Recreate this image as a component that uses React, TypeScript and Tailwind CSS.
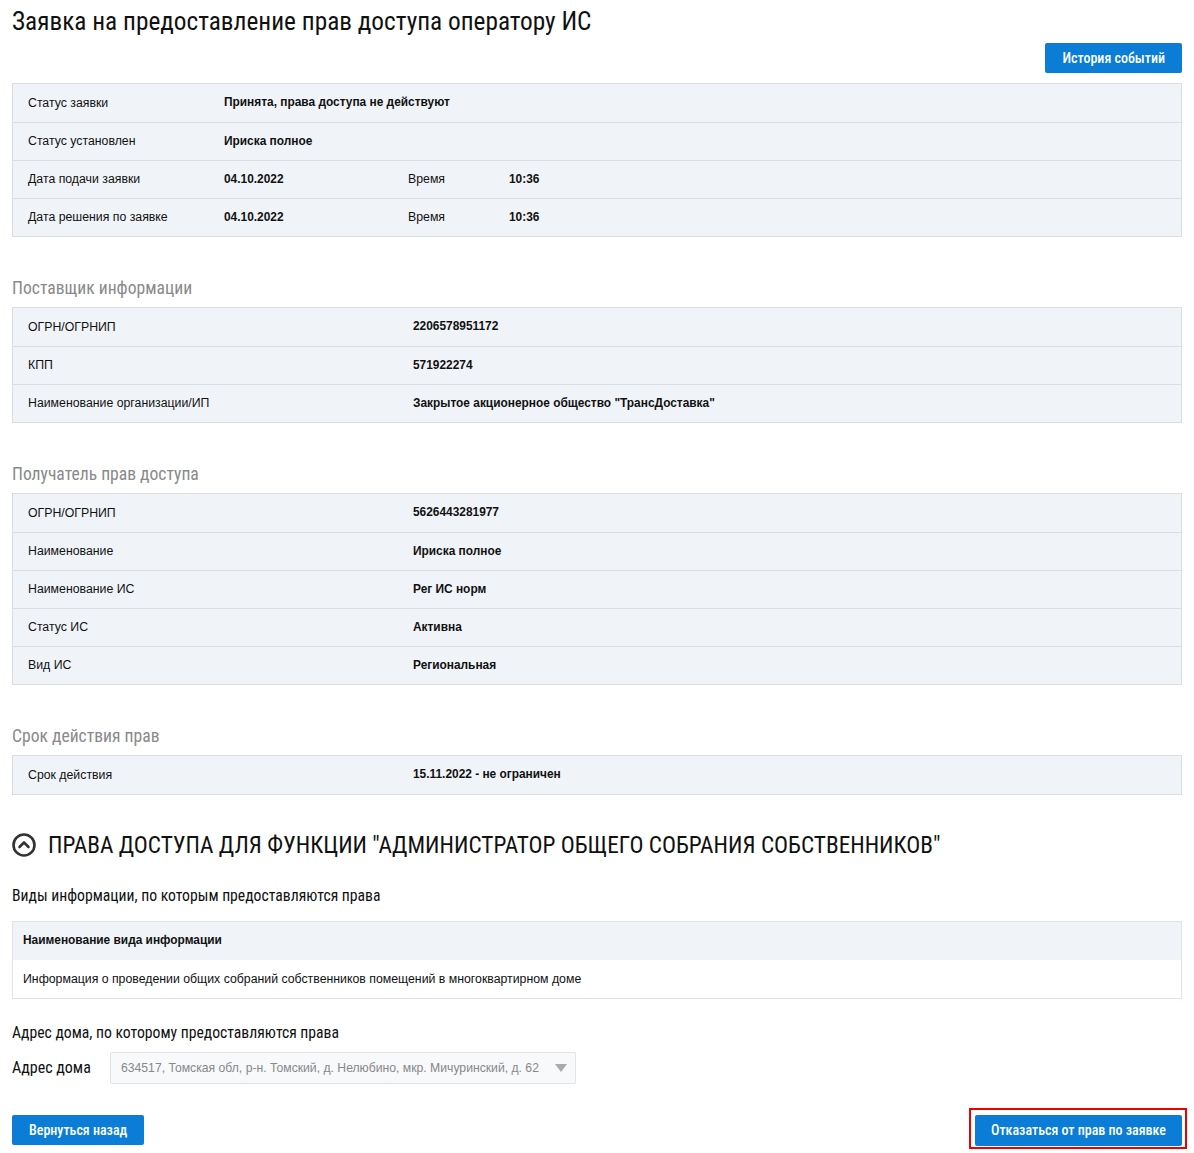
import React from 'react'

const cond = 'font-["Roboto_Condensed","Liberation_Sans_Narrow","Arial_Narrow",Roboto,sans-serif]'

type Row = { label: string; value: string; extraLabel?: string; extraValue?: string }

function InfoTable({ rows, valueCol }: { rows: Row[]; valueCol: string }) {
  return (
    <div className="border border-[#d9dee3] bg-[#f0f4f8]">
      {rows.map((r, i) => (
        <div
          key={i}
          className={`flex h-[38px] items-center text-[12.3px] text-[#111] ${i > 0 ? 'border-t border-[#d9dee3]' : ''}`}
        >
          <div className={`pl-[15px] shrink-0 ${valueCol}`}>{r.label}</div>
          {r.extraLabel ? (
            <>
              <div className="w-[184px] shrink-0 font-bold text-[11.9px]">{r.value}</div>
              <div className="w-[101px] shrink-0">{r.extraLabel}</div>
              <div className="font-bold text-[11.9px]">{r.extraValue}</div>
            </>
          ) : (
            <div className="font-bold text-[11.9px]">{r.value}</div>
          )}
        </div>
      ))}
    </div>
  )
}

function SectionTitle({ children }: { children: React.ReactNode }) {
  return <h2 className={`${cond} text-[17.6px] text-[#8a8a8a] mt-[39px] mb-[7px] leading-[24px]`}>{children}</h2>
}

export default function App() {
  return (
    <div className="bg-white min-h-[1153px] px-[12px] pb-[4px] font-['Liberation_Sans',Arial,sans-serif] text-[#111]">
      <h1 className={`${cond} text-[25.3px] leading-[30px] pt-[7px] text-[#111]`}>
        Заявка на предоставление прав доступа оператору ИС
      </h1>
      <div className="flex justify-end mt-[6px] mb-[10px]">
        <button className={`${cond} bg-[#0b7dd6] text-white text-[14px] font-medium h-[30px] px-[17px] rounded-[2px]`}>
          История событий
        </button>
      </div>

      <InfoTable
        valueCol="w-[211px]"
        rows={[
          { label: 'Статус заявки', value: 'Принята, права доступа не действуют' },
          { label: 'Статус установлен', value: 'Ириска полное' },
          { label: 'Дата подачи заявки', value: '04.10.2022', extraLabel: 'Время', extraValue: '10:36' },
          { label: 'Дата решения по заявке', value: '04.10.2022', extraLabel: 'Время', extraValue: '10:36' },
        ]}
      />

      <SectionTitle>Поставщик информации</SectionTitle>
      <InfoTable
        valueCol="w-[400px]"
        rows={[
          { label: 'ОГРН/ОГРНИП', value: '2206578951172' },
          { label: 'КПП', value: '571922274' },
          { label: 'Наименование организации/ИП', value: 'Закрытое акционерное общество "ТрансДоставка"' },
        ]}
      />

      <SectionTitle>Получатель прав доступа</SectionTitle>
      <InfoTable
        valueCol="w-[400px]"
        rows={[
          { label: 'ОГРН/ОГРНИП', value: '5626443281977' },
          { label: 'Наименование', value: 'Ириска полное' },
          { label: 'Наименование ИС', value: 'Рег ИС норм' },
          { label: 'Статус ИС', value: 'Активна' },
          { label: 'Вид ИС', value: 'Региональная' },
        ]}
      />

      <SectionTitle>Срок действия прав</SectionTitle>
      <InfoTable valueCol="w-[400px]" rows={[{ label: 'Срок действия', value: '15.11.2022 - не ограничен' }]} />

      <div className="flex items-center gap-[12px] mt-[35px]">
        <svg width="24" height="24" viewBox="0 0 24 24" fill="none" stroke="#333" strokeWidth="2.6">
          <circle cx="12" cy="12" r="10.5" />
          <path d="M7.5 14l4.5-4.5 4.5 4.5" strokeLinecap="round" strokeLinejoin="round" />
        </svg>
        <h2 className={`${cond} text-[23.3px] leading-[30px] uppercase text-[#111]`}>
          Права доступа для функции "Администратор общего собрания собственников"
        </h2>
      </div>

      <h3 className={`${cond} text-[15.7px] leading-[22px] mt-[25px] mb-[14px]`}>
        Виды информации, по которым предоставляются права
      </h3>
      <div className="border border-[#e0e4e8] text-[12.3px]">
        <div className="h-[38px] bg-[#f0f4f8] flex items-center pl-[10px] font-bold text-[11.9px]">
          Наименование вида информации
        </div>
        <div className="h-[38px] bg-white flex items-center pl-[10px]">
          Информация о проведении общих собраний собственников помещений в многоквартирном доме
        </div>
      </div>

      <h3 className={`${cond} text-[15.7px] leading-[22px] mt-[23px]`}>Адрес дома, по которому предоставляются права</h3>
      <div className="flex items-center mt-[8px]">
        <label className={`${cond} text-[16px] w-[98px] shrink-0 -mt-[1px]`}>Адрес дома</label>
        <div className="w-[466px] h-[32px] border border-[#e0e4e8] rounded-[2px] bg-[#f7f9fb] flex items-center justify-between pl-[10px] pr-[8px]">
          <span className="text-[12.2px] text-[#888]">634517, Томская обл, р-н. Томский, д. Нелюбино, мкр. Мичуринский, д. 62</span>
          <svg width="12" height="8" viewBox="0 0 12 8">
            <path d="M0 0h12L6 8z" fill="#aaa" />
          </svg>
        </div>
      </div>

      <div className="flex justify-between items-start mt-[24px]">
        <button className={`${cond} bg-[#0b7dd6] text-white text-[14px] font-medium h-[30px] px-[17px] rounded-[2px] mt-[7px]`}>
          Вернуться назад
        </button>
        <div className="border-2 border-[#e00] pt-[5px] pb-[1px] pl-[4px] pr-[3px] -mr-[5px]">
          <button className={`${cond} bg-[#0b7dd6] text-white text-[14px] font-medium h-[31px] px-[16px] rounded-[2px] block`}>
            Отказаться от прав по заявке
          </button>
        </div>
      </div>
    </div>
  )
}
